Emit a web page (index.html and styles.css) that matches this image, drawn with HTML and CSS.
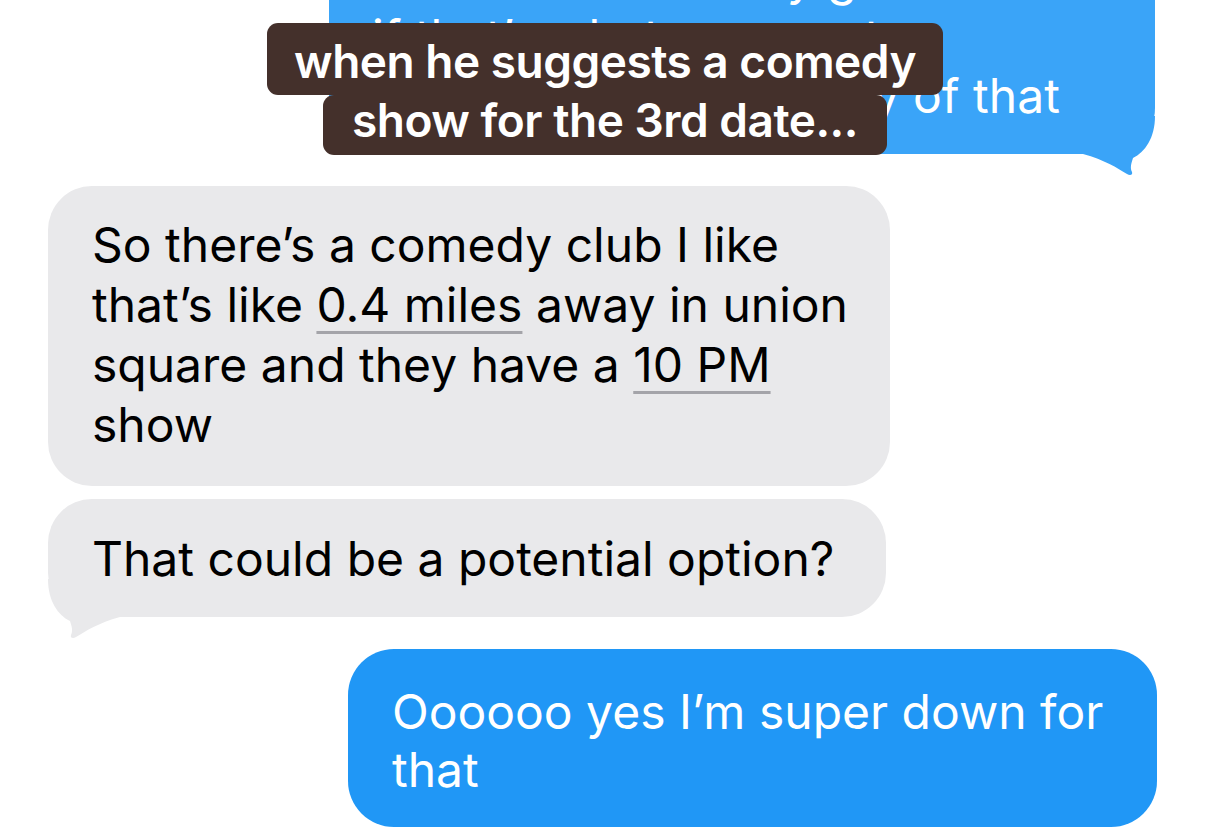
FILE: index.html
```html
<!DOCTYPE html>
<html lang="en">
<head>
<meta charset="utf-8">
<title>Messages</title>
<link rel="stylesheet" href="styles.css">
</head>
<body>
<div class="screen">
  <div class="chat">
    <div class="bubble out light top-bubble">
      I’m so chill with any genre<br>
      if that’s what you want<br>
      I’m totally down for any of that
      <svg class="tail tail-right" viewBox="0 0 90 70" aria-hidden="true"><g transform="translate(90,0) scale(-1,1)"><path d="M8,5 C8,27 18,41 30,47 C32,53 33,57 31,61 C30,64 33,65 36,63 C46,57 58,49 80,43 L80,5 Z"/></g></svg>
    </div>

    <div class="bubble in first-in">
      So there’s a comedy club I like<br>
      that’s like <span class="link">0.4 miles</span> away in union<br>
      square and they have a <span class="link">10 PM</span><br>
      show
    </div>

    <div class="bubble in second-in">
      That could be a potential option?
      <svg class="tail tail-left" viewBox="0 0 90 70" aria-hidden="true"><path d="M8,5 C8,27 18,41 30,47 C32,53 33,57 31,61 C30,64 33,65 36,63 C46,57 58,49 80,43 L80,5 Z"/></svg>
    </div>

    <div class="bubble out last-out">
      Oooooo yes I’m super down for<br>
      that
    </div>
  </div>

  <div class="caption">
    <div class="caption-line one">when he suggests a comedy</div>
    <div class="caption-line two">show for the 3rd date...</div>
  </div>
</div>
</body>
</html>
```

FILE: styles.css
```css
* { box-sizing: border-box; }

html, body {
  margin: 0;
  padding: 0;
  background: #ffffff;
}

.screen {
  position: relative;
  width: 1206px;
  height: 838px;
  overflow: hidden;
  background: #ffffff;
  font-family: "Inter", "Roboto", "Liberation Sans", sans-serif;
}

.chat {
  display: flex;
  flex-direction: column;
  align-items: flex-start;
}

.bubble {
  position: relative;
  font-size: 48px;
  line-height: 60px;
  letter-spacing: 0;
  white-space: nowrap;
}

.bubble.in {
  background: #e9e9eb;
  color: #000000;
  margin-left: 48px;
  border-radius: 44px;
  padding-left: 44px;
}

.bubble.out {
  color: #ffffff;
  background: #2097f6;
  margin-left: auto;
  border-radius: 46px;
}

.bubble.out.light {
  background: #3aa4f8;
}

.top-bubble {
  width: 826px;
  margin-right: 51px;
  margin-top: -81px;
  padding: 29px 0 29px 43px;
  line-height: 59px;
}

.first-in {
  width: 842px;
  margin-top: 32px;
  padding-top: 29px;
  padding-bottom: 31px;
}

.second-in {
  width: 838px;
  margin-top: 13px;
  padding-top: 30px;
  padding-bottom: 28px;
}

.last-out {
  width: 809px;
  margin-right: 49px;
  margin-top: 32px;
  padding: 34px 0 28px 44px;
  line-height: 58px;
}

.link {
  text-decoration: underline;
  text-decoration-color: #a4a4a9;
  text-decoration-thickness: 3px;
  text-underline-offset: 9px;
}

.tail {
  position: absolute;
  width: 90px;
  height: 70px;
  bottom: -27px;
}

.tail-left {
  left: -8px;
  fill: #e9e9eb;
}

.tail-right {
  right: -8px;
  fill: #3aa4f8;
}

.caption {
  position: absolute;
  top: 23px;
  left: 4px;
  right: 0;
  display: flex;
  flex-direction: column;
  align-items: center;
}

.caption-line {
  background: #44302b;
  color: #ffffff;
  font-family: "Inter", "Roboto", "Liberation Sans", sans-serif;
  font-weight: 600;
  font-size: 46px;
  letter-spacing: -0.5px;
  border-radius: 11px;
  white-space: nowrap;
}

.caption-line.one {
  line-height: 57px;
  padding: 10px 27px 5px;
}

.caption-line.two {
  line-height: 50px;
  padding: 0 29px 10px;
}
```
